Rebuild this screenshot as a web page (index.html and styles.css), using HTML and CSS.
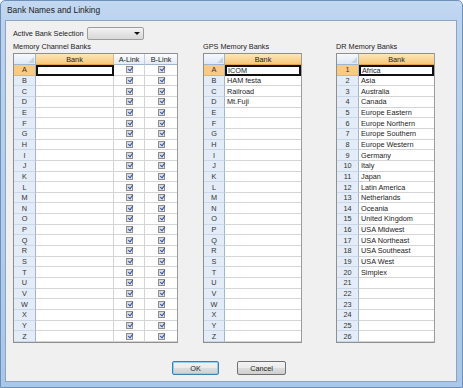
FILE: index.html
```html
<!DOCTYPE html>
<html>
<head>
<meta charset="utf-8">
<link rel="stylesheet" href="styles.css">
</head>
<body>
<div class="window">
  <div class="titlebar">Bank Names and Linking</div>
  <div class="client">
    <div class="active-row">
      <span class="lbl">Active Bank Selection</span>
      <div class="combo"><span class="arrow"></span></div>
    </div>
    <div class="groups">
      <div class="group g1">
        <div class="glabel">Memory Channel Banks</div>
        <div class="grid mc">
          <div class="corner"></div><div class="hd sel">Bank</div><div class="hd">A-Link</div><div class="hd last">B-Link</div>
          <div class="rh sel">A</div><div class="c cur"></div><div class="c ck"><span class="cb"></span></div><div class="c ck last"><span class="cb"></span></div>
          <div class="rh">B</div><div class="c"></div><div class="c ck"><span class="cb"></span></div><div class="c ck last"><span class="cb"></span></div>
          <div class="rh">C</div><div class="c"></div><div class="c ck"><span class="cb"></span></div><div class="c ck last"><span class="cb"></span></div>
          <div class="rh">D</div><div class="c"></div><div class="c ck"><span class="cb"></span></div><div class="c ck last"><span class="cb"></span></div>
          <div class="rh">E</div><div class="c"></div><div class="c ck"><span class="cb"></span></div><div class="c ck last"><span class="cb"></span></div>
          <div class="rh">F</div><div class="c"></div><div class="c ck"><span class="cb"></span></div><div class="c ck last"><span class="cb"></span></div>
          <div class="rh">G</div><div class="c"></div><div class="c ck"><span class="cb"></span></div><div class="c ck last"><span class="cb"></span></div>
          <div class="rh">H</div><div class="c"></div><div class="c ck"><span class="cb"></span></div><div class="c ck last"><span class="cb"></span></div>
          <div class="rh">I</div><div class="c"></div><div class="c ck"><span class="cb"></span></div><div class="c ck last"><span class="cb"></span></div>
          <div class="rh">J</div><div class="c"></div><div class="c ck"><span class="cb"></span></div><div class="c ck last"><span class="cb"></span></div>
          <div class="rh">K</div><div class="c"></div><div class="c ck"><span class="cb"></span></div><div class="c ck last"><span class="cb"></span></div>
          <div class="rh">L</div><div class="c"></div><div class="c ck"><span class="cb"></span></div><div class="c ck last"><span class="cb"></span></div>
          <div class="rh">M</div><div class="c"></div><div class="c ck"><span class="cb"></span></div><div class="c ck last"><span class="cb"></span></div>
          <div class="rh">N</div><div class="c"></div><div class="c ck"><span class="cb"></span></div><div class="c ck last"><span class="cb"></span></div>
          <div class="rh">O</div><div class="c"></div><div class="c ck"><span class="cb"></span></div><div class="c ck last"><span class="cb"></span></div>
          <div class="rh">P</div><div class="c"></div><div class="c ck"><span class="cb"></span></div><div class="c ck last"><span class="cb"></span></div>
          <div class="rh">Q</div><div class="c"></div><div class="c ck"><span class="cb"></span></div><div class="c ck last"><span class="cb"></span></div>
          <div class="rh">R</div><div class="c"></div><div class="c ck"><span class="cb"></span></div><div class="c ck last"><span class="cb"></span></div>
          <div class="rh">S</div><div class="c"></div><div class="c ck"><span class="cb"></span></div><div class="c ck last"><span class="cb"></span></div>
          <div class="rh">T</div><div class="c"></div><div class="c ck"><span class="cb"></span></div><div class="c ck last"><span class="cb"></span></div>
          <div class="rh">U</div><div class="c"></div><div class="c ck"><span class="cb"></span></div><div class="c ck last"><span class="cb"></span></div>
          <div class="rh">V</div><div class="c"></div><div class="c ck"><span class="cb"></span></div><div class="c ck last"><span class="cb"></span></div>
          <div class="rh">W</div><div class="c"></div><div class="c ck"><span class="cb"></span></div><div class="c ck last"><span class="cb"></span></div>
          <div class="rh">X</div><div class="c"></div><div class="c ck"><span class="cb"></span></div><div class="c ck last"><span class="cb"></span></div>
          <div class="rh">Y</div><div class="c"></div><div class="c ck"><span class="cb"></span></div><div class="c ck last"><span class="cb"></span></div>
          <div class="rh">Z</div><div class="c"></div><div class="c ck"><span class="cb"></span></div><div class="c ck last"><span class="cb"></span></div>
        </div>
      </div>
      <div class="group g2">
        <div class="glabel">GPS Memory Banks</div>
        <div class="grid two">
          <div class="corner"></div><div class="hd sel last">Bank</div>
          <div class="rh sel">A</div><div class="c cur last">ICOM</div>
          <div class="rh">B</div><div class="c last">HAM festa</div>
          <div class="rh">C</div><div class="c last">Railroad</div>
          <div class="rh">D</div><div class="c last">Mt.Fuji</div>
          <div class="rh">E</div><div class="c last"></div>
          <div class="rh">F</div><div class="c last"></div>
          <div class="rh">G</div><div class="c last"></div>
          <div class="rh">H</div><div class="c last"></div>
          <div class="rh">I</div><div class="c last"></div>
          <div class="rh">J</div><div class="c last"></div>
          <div class="rh">K</div><div class="c last"></div>
          <div class="rh">L</div><div class="c last"></div>
          <div class="rh">M</div><div class="c last"></div>
          <div class="rh">N</div><div class="c last"></div>
          <div class="rh">O</div><div class="c last"></div>
          <div class="rh">P</div><div class="c last"></div>
          <div class="rh">Q</div><div class="c last"></div>
          <div class="rh">R</div><div class="c last"></div>
          <div class="rh">S</div><div class="c last"></div>
          <div class="rh">T</div><div class="c last"></div>
          <div class="rh">U</div><div class="c last"></div>
          <div class="rh">V</div><div class="c last"></div>
          <div class="rh">W</div><div class="c last"></div>
          <div class="rh">X</div><div class="c last"></div>
          <div class="rh">Y</div><div class="c last"></div>
          <div class="rh">Z</div><div class="c last"></div>
        </div>
      </div>
      <div class="group g3">
        <div class="glabel">DR Memory Banks</div>
        <div class="grid two dr">
          <div class="corner"></div><div class="hd sel last">Bank</div>
          <div class="rh sel">1</div><div class="c cur last">Africa</div>
          <div class="rh">2</div><div class="c last">Asia</div>
          <div class="rh">3</div><div class="c last">Australia</div>
          <div class="rh">4</div><div class="c last">Canada</div>
          <div class="rh">5</div><div class="c last">Europe Eastern</div>
          <div class="rh">6</div><div class="c last">Europe Northern</div>
          <div class="rh">7</div><div class="c last">Europe Southern</div>
          <div class="rh">8</div><div class="c last">Europe Western</div>
          <div class="rh">9</div><div class="c last">Germany</div>
          <div class="rh">10</div><div class="c last">Italy</div>
          <div class="rh">11</div><div class="c last">Japan</div>
          <div class="rh">12</div><div class="c last">Latin America</div>
          <div class="rh">13</div><div class="c last">Netherlands</div>
          <div class="rh">14</div><div class="c last">Oceania</div>
          <div class="rh">15</div><div class="c last">United Kingdom</div>
          <div class="rh">16</div><div class="c last">USA Midwest</div>
          <div class="rh">17</div><div class="c last">USA Northeast</div>
          <div class="rh">18</div><div class="c last">USA Southeast</div>
          <div class="rh">19</div><div class="c last">USA West</div>
          <div class="rh">20</div><div class="c last">Simplex</div>
          <div class="rh">21</div><div class="c last"></div>
          <div class="rh">22</div><div class="c last"></div>
          <div class="rh">23</div><div class="c last"></div>
          <div class="rh">24</div><div class="c last"></div>
          <div class="rh">25</div><div class="c last"></div>
          <div class="rh">26</div><div class="c last"></div>
        </div>
      </div>
    </div>
    <div class="buttons">
      <div class="btn ok">OK</div>
      <div class="btn">Cancel</div>
    </div>
  </div>
</div>
</body>
</html>
```

FILE: styles.css
```css
* { box-sizing: border-box; }
html, body { margin: 0; padding: 0; }
body {
  width: 463px;
  height: 388px;
  overflow: hidden;
  font-family: "Liberation Sans", Arial, sans-serif;
  font-size: 7.3px;
  color: #1c1c1c;
}
.window {
  width: 463px;
  height: 388px;
  background: linear-gradient(to bottom, #c3d8f1 0px, #bcd3ef 20px, #a9c7ea 388px);
  border: 1px solid #6d8fb8;
  border-radius: 5px 5px 0 0;
  display: flex;
  flex-direction: column;
  padding: 0 5px 5px 4px;
}
.titlebar {
  height: 19px;
  font-size: 8.4px;
  line-height: 18px;
  padding-left: 2px;
  color: #1a1a1a;
  flex: none;
}
.client {
  flex: 1;
  background: #f0f0f0;
  border: 1px solid #8ba4c4;
  padding: 6px 0 0 7px;
  display: flex;
  flex-direction: column;
}
.active-row {
  display: flex;
  align-items: center;
  height: 13px;
  gap: 3px;
}
.lbl { white-space: nowrap; }
.combo {
  width: 57px;
  height: 13px;
  border: 1px solid #9d9d9d;
  border-radius: 2px;
  background: linear-gradient(to bottom, #f4f4f4, #e4e4e4 50%, #d9d9d9);
  display: flex;
  align-items: center;
  justify-content: flex-end;
  padding-right: 3px;
}
.arrow {
  width: 0;
  height: 0;
  border-left: 3px solid transparent;
  border-right: 3px solid transparent;
  border-top: 3px solid #111;
}
.groups {
  display: flex;
  gap: 25px;
}
.g1 { width: 165px; }
.g2 { width: 99px; }
.g3 { width: 99px; margin-left: 9px; }
.glabel {
  height: 13px;
  line-height: 13px;
  white-space: nowrap;
}
.grid {
  display: grid;
  grid-template-rows: 11px repeat(26, 1fr);
  height: 290px;
  border: 1px solid #8f8f8f;
  border-right-color: #9c9c9c;
  background: #fff;
}
.mc { grid-template-columns: 22px 78px 31px 1fr; }
.two { grid-template-columns: 21px 1fr; }
.dr { grid-template-columns: 22px 1fr; }
.corner {
  background: linear-gradient(to bottom, #f6f9fd, #dfe8f5);
  border-right: 1px solid #9eb6ce;
  border-bottom: 1px solid #9eb6ce;
  position: relative;
}
.corner::after {
  content: "";
  position: absolute;
  right: 1px;
  bottom: 1px;
  width: 0;
  height: 0;
  border-left: 6px solid transparent;
  border-bottom: 6px solid #c5d3e3;
}
.hd {
  background: linear-gradient(to bottom, #fbfcfe, #e4ebf4);
  border-right: 1px solid #c4cfdc;
  border-bottom: 1px solid #9eb6ce;
  display: flex;
  align-items: center;
  justify-content: center;
  color: #222;
}
.hd.sel {
  background: linear-gradient(to bottom, #fde7b7, #f8c87a);
  border-bottom-color: #e0a84e;
  border-right-color: #e0b878;
}
.hd.last { border-right: none; }
.rh {
  background: #e4ecf7;
  border-right: 1px solid #9eb6ce;
  border-bottom: 1px solid #c9d7e8;
  display: flex;
  align-items: center;
  justify-content: center;
  color: #333;
}
.rh.sel { background: #f9ca84; border-bottom-color: #e7b46a; }
.c {
  border-right: 1px solid #d4d4d4;
  border-bottom: 1px solid #d4d4d4;
  display: flex;
  align-items: center;
  padding-left: 2px;
  white-space: nowrap;
  overflow: hidden;
}
.c.last { border-right: none; }
.c.cur { border: 2px solid #111; padding-left: 1px; }
.c.cur.last { border-right: 2px solid #111; }
.c.ck { justify-content: center; padding-left: 0; }
.cb {
  width: 7px;
  height: 7px;
  border: 1px solid #8d8d8d;
  background: linear-gradient(135deg, #d2d2d2, #f1f1f1);
  position: relative;
}
.cb::after {
  content: "";
  position: absolute;
  left: 2px;
  top: -1px;
  width: 2px;
  height: 4px;
  border: solid #3356b8;
  border-width: 0 1px 1px 0;
  transform: rotate(38deg);
}
.buttons {
  display: flex;
  justify-content: center;
  gap: 18px;
  margin-top: 18px;
  padding-right: 11px;
}
.btn {
  width: 49px;
  height: 14px;
  border: 1px solid #707070;
  border-radius: 2px;
  background: linear-gradient(to bottom, #f3f3f3 0%, #ebebeb 50%, #dddddd 51%, #cfcfcf 100%);
  display: flex;
  align-items: center;
  justify-content: center;
}
.btn.ok {
  width: 47px;
  border-color: #3c7fb1;
  box-shadow: inset 0 0 0 1px #8fd0f1;
}
```
